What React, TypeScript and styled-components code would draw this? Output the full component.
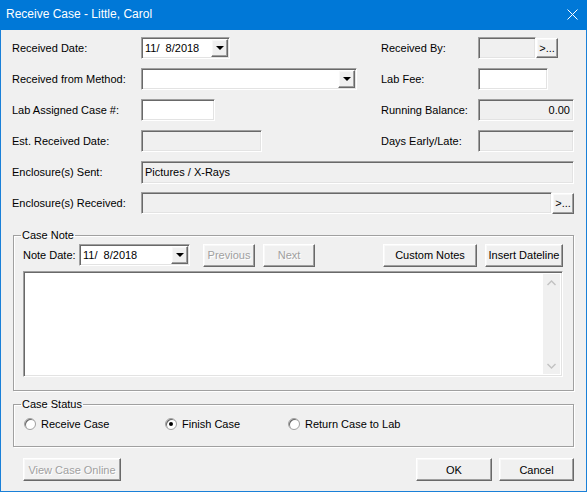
import React from 'react';
import styled, { createGlobalStyle } from 'styled-components';

const GlobalStyle = createGlobalStyle`
  html, body {
    margin: 0;
    padding: 0;
    background: #ffffff;
  }
  body {
    font-family: "Liberation Sans", Arial, sans-serif;
    font-size: 11px;
    color: #000000;
  }
  * {
    box-sizing: border-box;
  }
`;

const sunken = `
  border-top: 1px solid #a0a0a0;
  border-left: 1px solid #a0a0a0;
  border-bottom: 1px solid #ffffff;
  border-right: 1px solid #ffffff;
  box-shadow: inset 1px 1px 0 #696969, inset -1px -1px 0 #e3e3e3;
`;

const raised = `
  border-top: 1px solid #ffffff;
  border-left: 1px solid #ffffff;
  border-bottom: 1px solid #696969;
  border-right: 1px solid #696969;
  box-shadow: inset -1px -1px 0 #a0a0a0, inset 1px 1px 0 #f8f8f8;
`;

const Window = styled.div`
  width: 587px;
  height: 492px;
  display: flex;
  flex-direction: column;
  background: #f0f0f0;
`;

const TitleBar = styled.div`
  height: 30px;
  flex: none;
  background: #0078d7;
  color: #ffffff;
  display: flex;
  align-items: center;
  justify-content: space-between;
  padding: 0 9px 2px 6px;
  font-size: 12px;
`;

const CloseIcon = styled.svg`
  width: 11px;
  height: 11px;
`;

const Body = styled.div`
  flex: 1;
  border-left: 1px solid #1a80d8;
  border-right: 1px solid #1a80d8;
  border-bottom: 1px solid #1a80d8;
  padding: 7px 12px 0 11px;
  display: flex;
  flex-direction: column;
`;

const FormGrid = styled.div`
  display: grid;
  grid-template-columns: 129px 240px 97px 1fr;
  grid-auto-rows: 22px;
  row-gap: 9px;
`;

const Label = styled.div`
  display: flex;
  align-items: center;
  white-space: nowrap;
`;

const Cell = styled.div<{ $span?: boolean }>`
  display: flex;
  align-items: center;
  ${p => (p.$span ? 'grid-column: 2 / 5;' : '')}
`;

const Field = styled.div<{ $w?: number; $h?: number; $disabled?: boolean; $right?: boolean }>`
  ${sunken}
  width: ${p => (p.$w ? `${p.$w}px` : 'auto')};
  ${p => (p.$w ? '' : 'flex: 1;')}
  height: ${p => p.$h ?? 22}px;
  background: ${p => (p.$disabled ? '#f0f0f0' : '#ffffff')};
  display: flex;
  align-items: center;
  justify-content: ${p => (p.$right ? 'flex-end' : 'flex-start')};
  padding: 0 3px;
  white-space: pre;
`;

const Combo = styled(Field)`
  padding: 0 1px 0 3px;
  justify-content: space-between;
`;

const DropButton = styled.div`
  ${raised}
  width: 17px;
  height: 18px;
  background: #f0f0f0;
  display: flex;
  align-items: center;
  justify-content: center;
`;

const Arrow = styled.div`
  width: 0;
  height: 0;
  border-left: 4px solid transparent;
  border-right: 4px solid transparent;
  border-top: 4px solid #000000;
`;

const Button = styled.button<{ $w: number; $h?: number; $disabled?: boolean }>`
  ${raised}
  width: ${p => p.$w}px;
  height: ${p => p.$h ?? 23}px;
  background: #f0f0f0;
  font-family: inherit;
  font-size: 11px;
  padding: 0;
  flex: none;
  color: ${p => (p.$disabled ? '#a0a0a0' : '#000000')};
  text-shadow: ${p => (p.$disabled ? '1px 1px 0 #ffffff' : 'none')};
  white-space: nowrap;
`;

const Group = styled.fieldset<{ $top: number }>`
  margin: ${p => p.$top}px 0 0 1px;
  border: 1px solid #a0a0a0;
  box-shadow: inset 1px 1px 0 #ffffff, 1px 1px 0 #ffffff;
  padding: 1px 10px 13px 9px;
  min-width: 0;
`;

const Legend = styled.legend`
  padding: 0 1px;
  margin-left: -2px;
  line-height: 13px;
`;

const NoteRow = styled.div`
  display: flex;
  align-items: center;
  height: 24px;
`;

const NoteLabel = styled.span`
  width: 56px;
  white-space: nowrap;
`;

const Spacer = styled.div<{ $w?: number }>`
  ${p => (p.$w ? `width: ${p.$w}px;` : 'flex: 1;')}
`;

const NoteBox = styled.div`
  ${sunken}
  margin-top: 4px;
  height: 106px;
  background: #ffffff;
  display: flex;
  padding: 2px;
`;

const NoteText = styled.div`
  flex: 1;
`;

const ScrollBar = styled.div`
  width: 17px;
  background: #f0f0f0;
  display: flex;
  flex-direction: column;
  justify-content: space-between;
  align-items: center;
  padding: 6px 0 5px;
`;

const Chevron = styled.svg`
  width: 9px;
  height: 6px;
`;

const RadioRow = styled.div`
  display: grid;
  grid-template-columns: 141px 123px auto;
  height: 18px;
  align-items: center;
  margin-top: 3px;
  padding-left: 1px;
`;

const RadioItem = styled.label`
  display: flex;
  align-items: center;
  gap: 5px;
  white-space: nowrap;
`;

const RadioDot = styled.span<{ $checked?: boolean }>`
  width: 12px;
  height: 12px;
  border-radius: 50%;
  background: #ffffff;
  border: 1px solid #a0a0a0;
  box-shadow: inset 1px 1px 0 #696969;
  display: flex;
  align-items: center;
  justify-content: center;
  &::after {
    content: '';
    width: 4px;
    height: 4px;
    border-radius: 50%;
    background: ${p => (p.$checked ? '#000000' : 'transparent')};
  }
`;

const ButtonRow = styled.div`
  display: flex;
  align-items: center;
  margin-top: 11px;
  padding-left: 11px;
  gap: 7px;
`;

const DateCombo: React.FC<{ w: number }> = ({ w }) => (
  <Combo $w={w}>
    <span>11/  8/2018</span>
    <DropButton>
      <Arrow />
    </DropButton>
  </Combo>
);

const App: React.FC = () => (
  <>
    <GlobalStyle />
    <Window>
      <TitleBar>
        <span>Receive Case - Little, Carol</span>
        <CloseIcon viewBox="0 0 11 11">
          <path d="M0.5 0.5 L10.5 10.5 M10.5 0.5 L0.5 10.5" stroke="#ffffff" strokeWidth="1" />
        </CloseIcon>
      </TitleBar>
      <Body>
        <FormGrid>
          <Label>Received Date:</Label>
          <Cell>
            <DateCombo w={89} />
          </Cell>
          <Label>Received By:</Label>
          <Cell>
            <Field $w={58} $disabled />
            <Button $w={22} $h={20}>&gt;...</Button>
          </Cell>

          <Label>Received from Method:</Label>
          <Cell>
            <Combo $w={216}>
              <span />
              <DropButton>
                <Arrow />
              </DropButton>
            </Combo>
          </Cell>
          <Label>Lab Fee:</Label>
          <Cell>
            <Field $w={70} />
          </Cell>

          <Label>Lab Assigned Case #:</Label>
          <Cell>
            <Field $w={74} />
          </Cell>
          <Label>Running Balance:</Label>
          <Cell>
            <Field $disabled $right>0.00</Field>
          </Cell>

          <Label>Est. Received Date:</Label>
          <Cell>
            <Field $w={121} $disabled />
          </Cell>
          <Label>Days Early/Late:</Label>
          <Cell>
            <Field $disabled />
          </Cell>

          <Label>Enclosure(s) Sent:</Label>
          <Cell $span>
            <Field $disabled $h={23}>Pictures / X-Rays</Field>
          </Cell>

          <Label>Enclosure(s) Received:</Label>
          <Cell $span>
            <Field $disabled />
            <Button $w={22} $h={21}>&gt;...</Button>
          </Cell>
        </FormGrid>

        <Group $top={15}>
          <Legend>Case Note</Legend>
          <NoteRow>
            <NoteLabel>Note Date:</NoteLabel>
            <DateCombo w={111} />
            <Spacer $w={13} />
            <Button $w={52} $disabled>Previous</Button>
            <Spacer $w={8} />
            <Button $w={52} $disabled>Next</Button>
            <Spacer />
            <Button $w={94}>Custom Notes</Button>
            <Spacer $w={8} />
            <Button $w={78}>Insert Dateline</Button>
          </NoteRow>
          <NoteBox>
            <NoteText />
            <ScrollBar>
              <Chevron viewBox="0 0 9 6">
                <path d="M0.5 5 L4.5 1 L8.5 5" fill="none" stroke="#c2c2c2" strokeWidth="1.4" />
              </Chevron>
              <Chevron viewBox="0 0 9 6">
                <path d="M0.5 1 L4.5 5 L8.5 1" fill="none" stroke="#c2c2c2" strokeWidth="1.4" />
              </Chevron>
            </ScrollBar>
          </NoteBox>
        </Group>

        <Group $top={7}>
          <Legend>Case Status</Legend>
          <RadioRow>
            <RadioItem>
              <RadioDot />
              Receive Case
            </RadioItem>
            <RadioItem>
              <RadioDot $checked />
              Finish Case
            </RadioItem>
            <RadioItem>
              <RadioDot />
              Return Case to Lab
            </RadioItem>
          </RadioRow>
        </Group>

        <ButtonRow>
          <Button $w={98} $disabled>View Case Online</Button>
          <Spacer />
          <Button $w={76}>OK</Button>
          <Button $w={75}>Cancel</Button>
        </ButtonRow>
      </Body>
    </Window>
  </>
);

export default App;
